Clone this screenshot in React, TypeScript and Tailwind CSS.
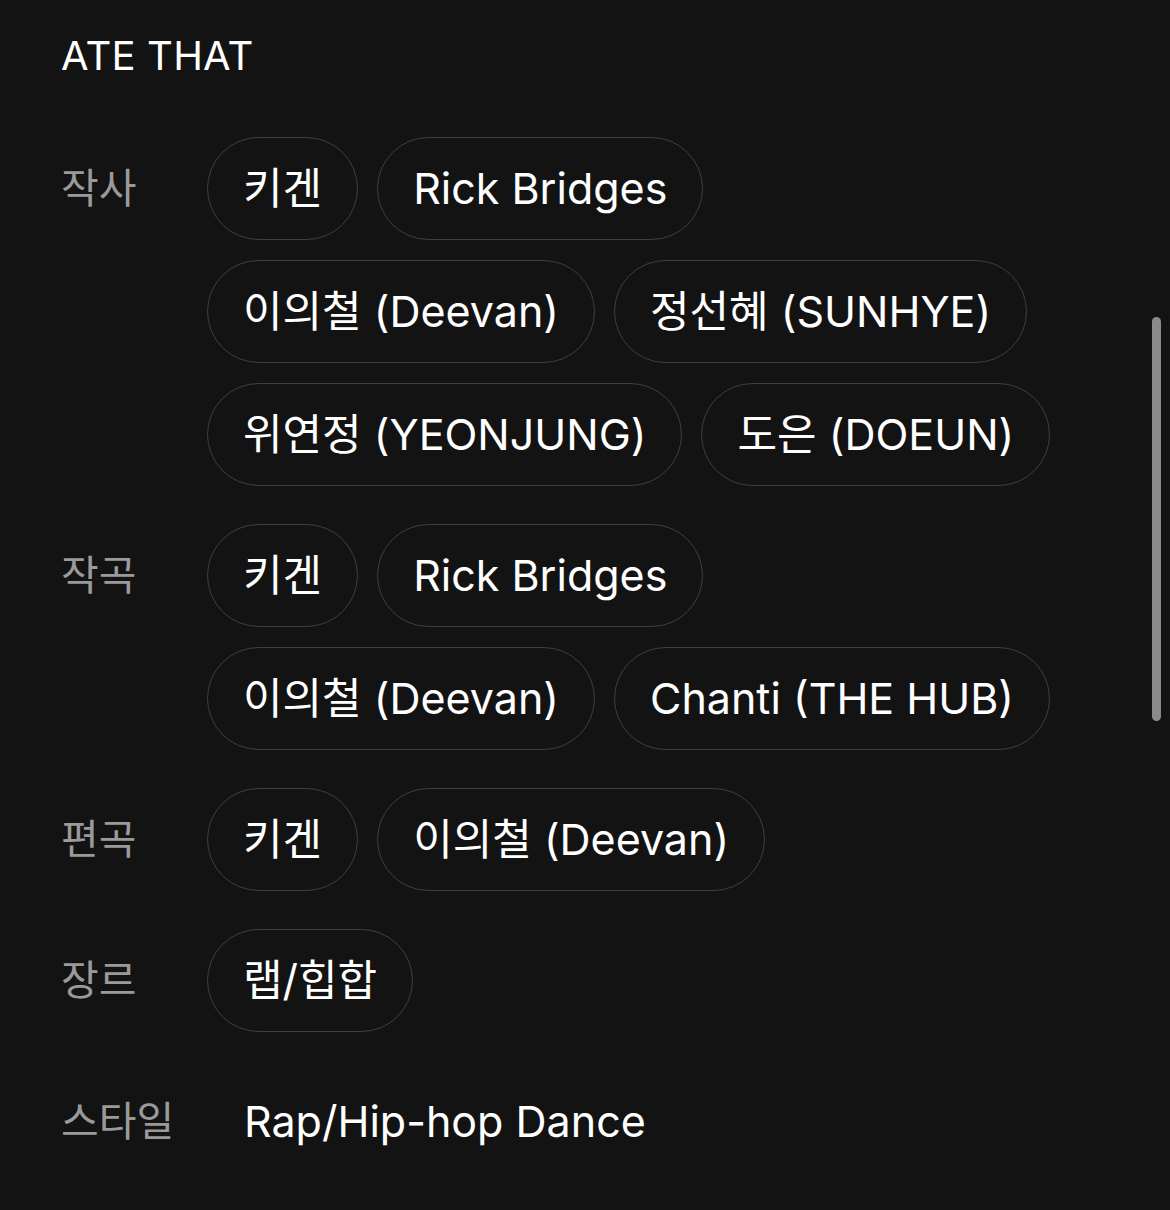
import React from "react";

interface Credit {
  label: string;
  chips?: string[][];
  text?: string;
}

const credits: Credit[] = [
  {
    label: "작사",
    chips: [
      ["키겐", "Rick Bridges"],
      ["이의철 (Deevan)", "정선혜 (SUNHYE)"],
      ["위연정 (YEONJUNG)", "도은 (DOEUN)"],
    ],
  },
  {
    label: "작곡",
    chips: [
      ["키겐", "Rick Bridges"],
      ["이의철 (Deevan)", "Chanti (THE HUB)"],
    ],
  },
  { label: "편곡", chips: [["키겐", "이의철 (Deevan)"]] },
  { label: "장르", chips: [["랩/힙합"]] },
  { label: "스타일", text: "Rap/Hip-hop Dance" },
];

const Chip = ({ name }: { name: string }) => (
  <div className="flex h-[103px] items-center rounded-full border border-[#3f3f3f] px-[35px] text-[43px] text-white">
    {name}
  </div>
);

export default function App() {
  return (
    <div
      className="relative h-[1210px] w-[1170px] overflow-hidden bg-[#131313] pl-[61px] pt-[28px]"
      style={{ fontFamily: 'Inter, "Noto Sans CJK KR", sans-serif' }}
    >
      <h1 className="text-[40px] leading-[56px] font-normal tracking-[0.2px] text-white">
        ATE THAT
      </h1>

      <div className="mt-[53px] flex flex-col gap-[38px]">
        {credits.map((c) => (
          <div key={c.label} className="flex">
            <div className="flex h-[103px] w-[146px] shrink-0 items-center text-[41px] text-[#9a9a9a]">
              {c.label}
            </div>
            {c.chips ? (
              <div className="flex flex-col gap-[20px]">
                {c.chips.map((row, i) => (
                  <div key={i} className="flex gap-[19px]">
                    {row.map((name) => (
                      <Chip key={name} name={name} />
                    ))}
                  </div>
                ))}
              </div>
            ) : (
              <div className="flex h-[103px] items-center pl-[37px] text-[43px] text-white">
                {c.text}
              </div>
            )}
          </div>
        ))}
      </div>

      <div className="absolute top-[317px] right-[9px] h-[404px] w-[9px] rounded-full bg-[#8a8a8a]" />
    </div>
  );
}
